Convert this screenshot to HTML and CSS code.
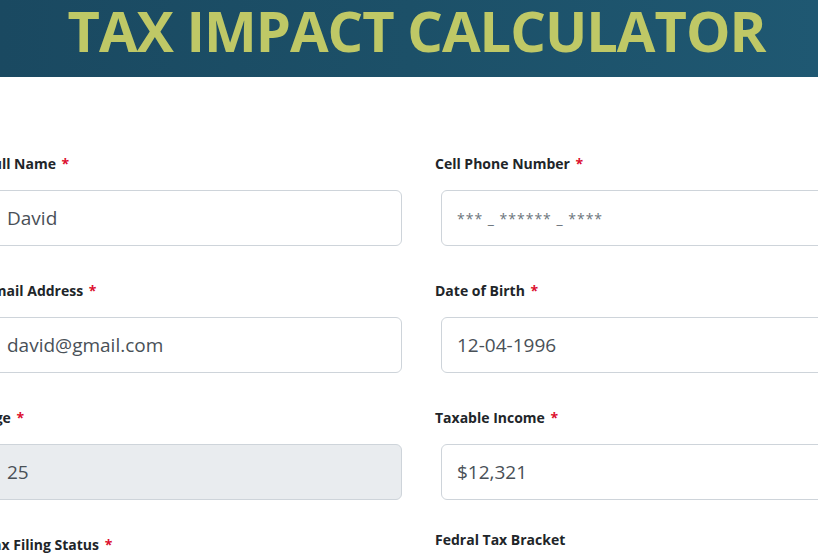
FILE: index.html
```html
<!DOCTYPE html>
<html>
<head>
<meta charset="utf-8">
<link rel="stylesheet" href="styles.css">
</head>
<body>
<header class="banner">
  <h1 class="title">TAX IMPACT CALCULATOR</h1>
</header>
<form class="form">
  <div class="field">
    <label class="label">Full Name <span class="req">*</span></label>
    <div class="input">David</div>
  </div>
  <div class="field">
    <label class="label">Cell Phone Number <span class="req">*</span></label>
    <div class="input placeholder">*** _ ****** _ ****</div>
  </div>
  <div class="field">
    <label class="label">Email Address <span class="req">*</span></label>
    <div class="input">david@gmail.com</div>
  </div>
  <div class="field">
    <label class="label">Date of Birth <span class="req">*</span></label>
    <div class="input">12-04-1996</div>
  </div>
  <div class="field">
    <label class="label">Age <span class="req">*</span></label>
    <div class="input disabled">25</div>
  </div>
  <div class="field">
    <label class="label">Taxable Income <span class="req">*</span></label>
    <div class="input">$12,321</div>
  </div>
  <div class="field">
    <label class="label">Tax Filing Status <span class="req">*</span></label>
  </div>
  <div class="field">
    <label class="label raised">Fedral Tax Bracket</label>
  </div>
</form>
</body>
</html>
```

FILE: styles.css
```css
html, body {
  margin: 0;
  padding: 0;
  background: #ffffff;
  overflow: hidden;
}
body {
  font-family: "Open Sans", "Noto Sans", sans-serif;
  color: #212529;
}
.banner {
  height: 77px;
  background: linear-gradient(90deg, #1a4961 0%, #1c5068 50%, #1f5872 100%);
  display: flex;
  justify-content: center;
  align-items: flex-start;
  padding-left: 15px;
  overflow: hidden;
}
.title {
  margin: 0;
  font-size: 56px;
  font-weight: 700;
  line-height: 60px;
  color: #bfc866;
  letter-spacing: -1px;
  white-space: nowrap;
}
.form {
  display: grid;
  grid-template-columns: 417px 417px;
  column-gap: 33px;
  row-gap: 34px;
  margin-left: -15px;
  padding-top: 76px;
}
.field {
  display: flex;
  flex-direction: column;
  gap: 16px;
}
.label {
  display: block;
  font-size: 14px;
  font-weight: 700;
  line-height: 21px;
  color: #212529;
}
.label.raised {
  margin-top: -5px;
}
.req {
  color: #dc0f2f;
  margin-left: 2px;
}
.input {
  margin-left: 6px;
  width: 411px;
  height: 56px;
  box-sizing: border-box;
  border: 1px solid #ced4da;
  border-radius: 6px;
  padding: 0 15px;
  display: flex;
  align-items: center;
  font-size: 19px;
  color: #495057;
  background: #ffffff;
}
.input.placeholder {
  font-size: 14px;
  color: #6c757d;
  letter-spacing: 1px;
}
.input.disabled {
  background: #e9ecef;
}
```
